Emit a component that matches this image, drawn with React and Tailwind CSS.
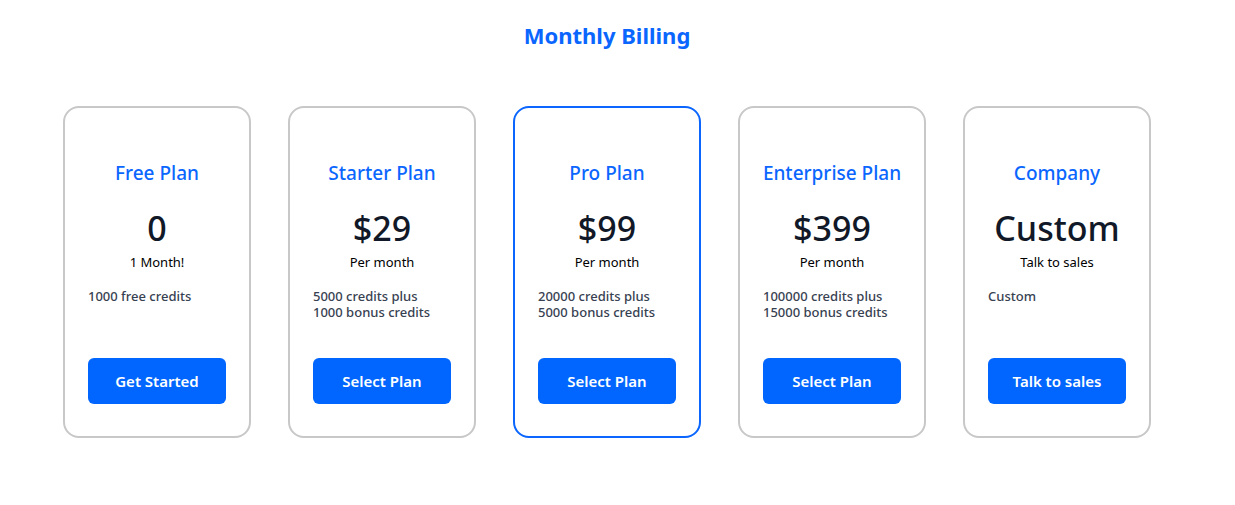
import React from "react";

const plans = [
  { name: "Free Plan", price: "0", sub: "1 Month!", features: ["1000 free credits"], cta: "Get Started" },
  { name: "Starter Plan", price: "$29", sub: "Per month", features: ["5000 credits plus", "1000 bonus credits"], cta: "Select Plan" },
  { name: "Pro Plan", price: "$99", sub: "Per month", features: ["20000 credits plus", "5000 bonus credits"], cta: "Select Plan", highlight: true },
  { name: "Enterprise Plan", price: "$399", sub: "Per month", features: ["100000 credits plus", "15000 bonus credits"], cta: "Select Plan" },
  { name: "Company", price: "Custom", sub: "Talk to sales", features: ["Custom"], cta: "Talk to sales" },
];

function Card({ plan }) {
  return (
    <div
      className={
        "w-[188px] h-[332px] rounded-[16px] border-2 bg-white flex flex-col px-[23px] pt-[51px] " +
        (plan.highlight ? "border-[#0a66ff]" : "border-[#c8c8c8]")
      }
    >
      <div className="text-center whitespace-nowrap -mx-2 text-[19px] leading-[28px] font-medium text-[#0a66ff]">{plan.name}</div>
      <div className="mt-[21px] text-center whitespace-nowrap -mx-2 text-[34px] leading-[40px] font-medium text-[#111827]">{plan.price}</div>
      <div className="mt-[4px] text-center text-[13px] leading-[20px] text-black">{plan.sub}</div>
      <div className="mt-[16px] h-[70px] text-[13px] leading-[16px] font-medium text-[#374151]">
        {plan.features.map((f) => (
          <div key={f} className="whitespace-nowrap">{f}</div>
        ))}
      </div>
      <button className="h-[46px] w-full rounded-[6px] bg-[#0066ff] text-white text-[15px] font-semibold">
        {plan.cta}
      </button>
    </div>
  );
}

export default function App() {
  return (
    <div className="min-h-[505px] bg-white" style={{ fontFamily: '"Noto Sans", "Open Sans", sans-serif' }}>
      <div className="w-[1214px] flex flex-col items-center pt-[19px]">
        <h1 className="text-[22px] leading-[32px] font-bold text-[#0a66ff]">Monthly Billing</h1>
        <div className="mt-[55px] flex gap-[37px]">
          {plans.map((p) => (
            <Card key={p.name} plan={p} />
          ))}
        </div>
      </div>
    </div>
  );
}
